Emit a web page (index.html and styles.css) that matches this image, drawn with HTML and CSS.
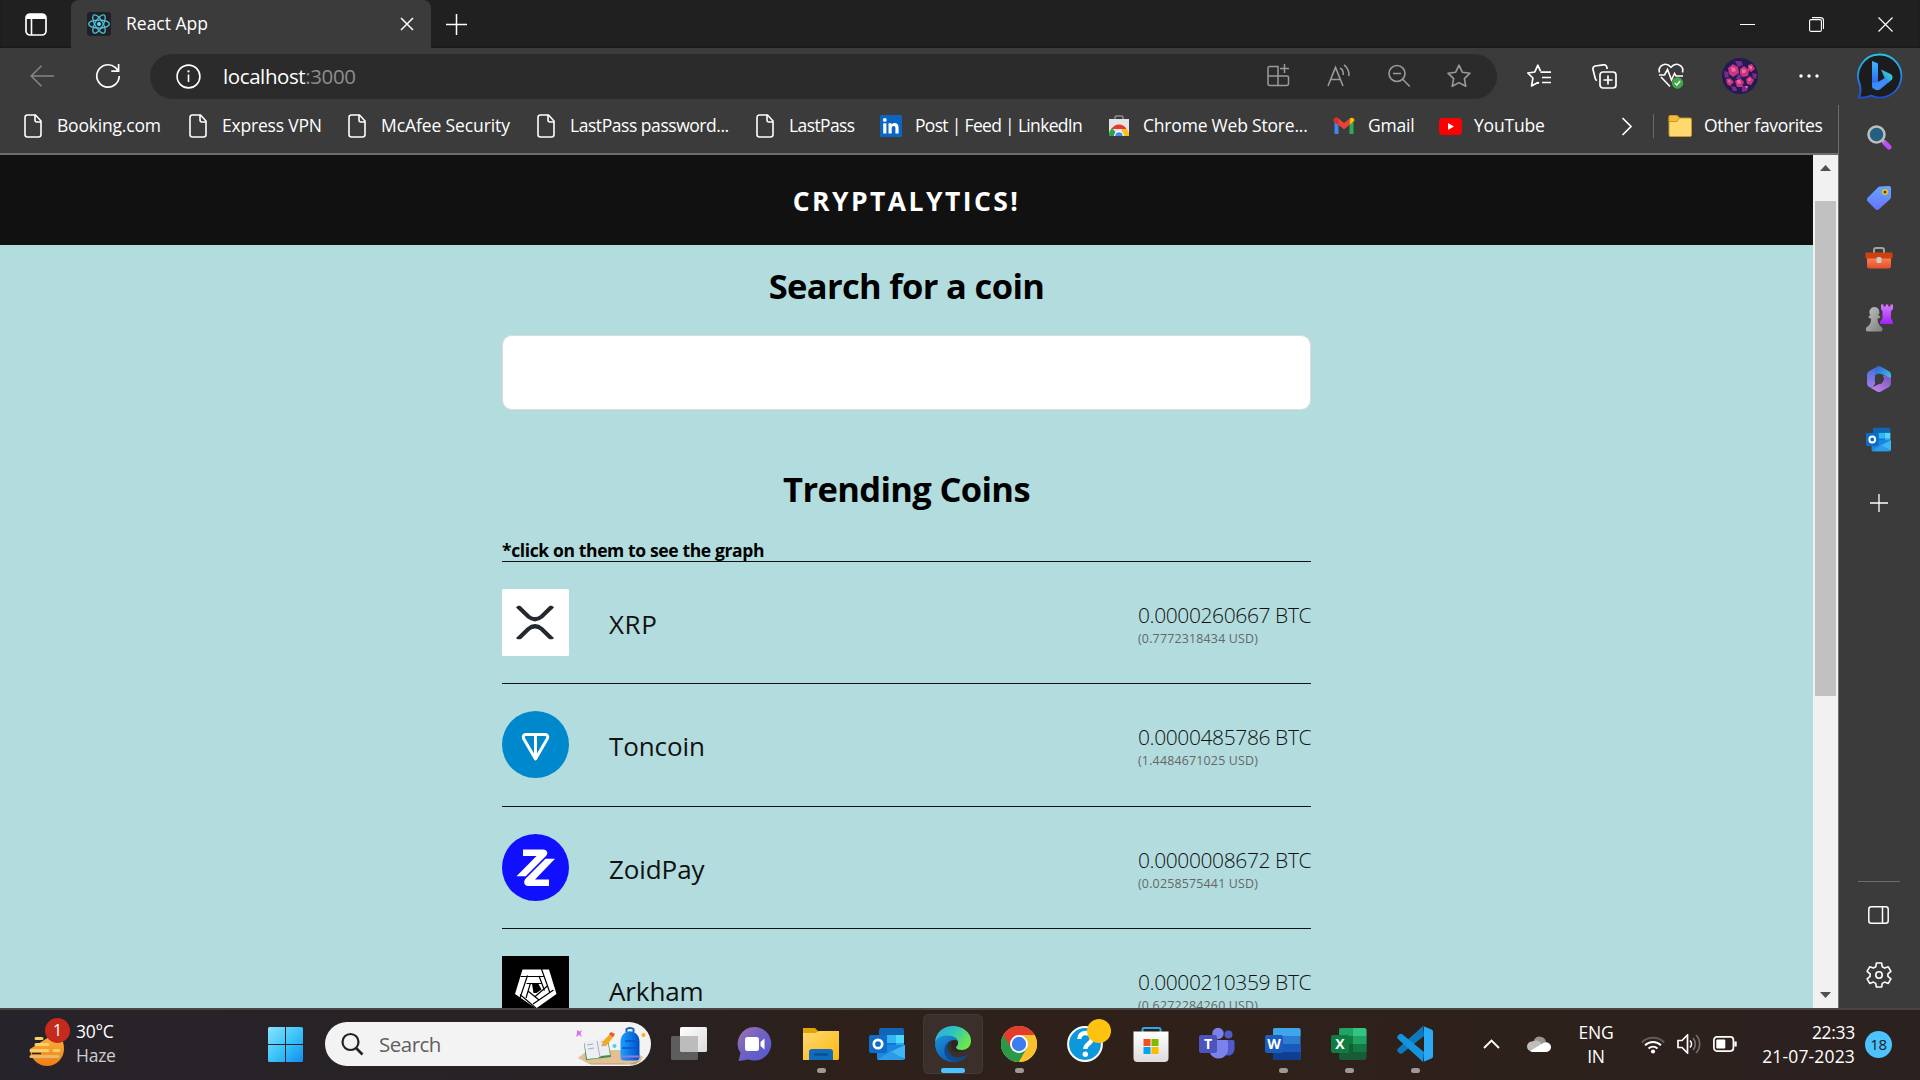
FILE: index.html
```
<!DOCTYPE html>
<html lang="en">
<head>
<meta charset="utf-8">
<title>React App</title>
<link rel="stylesheet" href="styles.css">
</head>
<body>
<svg class="defs" width="0" height="0" aria-hidden="true">
  <defs>
    <linearGradient id="win" x1="0" y1="0" x2="1" y2="1"><stop offset="0" stop-color="#8ce2ff"/><stop offset=".5" stop-color="#3cc5f9"/><stop offset="1" stop-color="#0f8ff0"/></linearGradient>
    <linearGradient id="bing" x1="0" y1="0" x2="0" y2="1"><stop offset="0" stop-color="#37bdff"/><stop offset="1" stop-color="#2b4ff0"/></linearGradient>
    <linearGradient id="bing2" x1="0" y1="1" x2="1" y2="0"><stop offset="0" stop-color="#1a7cf2"/><stop offset="1" stop-color="#49e6c8"/></linearGradient>
    <linearGradient id="bubble" x1="0" y1="0" x2="0" y2="1"><stop offset="0" stop-color="#22c7e8"/><stop offset="1" stop-color="#1b4fd8"/></linearGradient>
    <linearGradient id="tag" x1="0" y1="0" x2="0" y2="1"><stop offset="0" stop-color="#66a8ff"/><stop offset="1" stop-color="#6672ff"/></linearGradient>
    <linearGradient id="box" x1="0" y1="0" x2="0" y2="1"><stop offset="0" stop-color="#ff7f55"/><stop offset="1" stop-color="#e0502a"/></linearGradient>
    <linearGradient id="rook" x1="0" y1="0" x2="0" y2="1"><stop offset="0" stop-color="#d87cff"/><stop offset="1" stop-color="#a020f8"/></linearGradient>
    <linearGradient id="pawn" x1="0" y1="0" x2="1" y2="1"><stop offset="0" stop-color="#c4c4c4"/><stop offset="1" stop-color="#7d7d7d"/></linearGradient>
    <linearGradient id="m1" x1="0" y1="0" x2="0" y2="1"><stop offset="0" stop-color="#3f6fd6"/><stop offset="1" stop-color="#a77bea"/></linearGradient>
    <linearGradient id="m2" x1="0" y1="0" x2="1" y2="1"><stop offset="0" stop-color="#2a62cf"/><stop offset="1" stop-color="#49c8f5"/></linearGradient>
    <linearGradient id="m3" x1="0" y1="1" x2="1" y2="0"><stop offset="0" stop-color="#c58af0"/><stop offset="1" stop-color="#7a4fbd"/></linearGradient>
    <linearGradient id="chat" x1="0" y1="0" x2="1" y2="1"><stop offset="0" stop-color="#a274b0"/><stop offset=".45" stop-color="#6f62c4"/><stop offset="1" stop-color="#5058d0"/></linearGradient>
    <linearGradient id="folder" x1="0" y1="0" x2="1" y2="1"><stop offset="0" stop-color="#ffd970"/><stop offset="1" stop-color="#fbb812"/></linearGradient>
    <linearGradient id="edgeTop" x1="0" y1="0" x2="1" y2=".5"><stop offset="0" stop-color="#2fa8e6"/><stop offset=".5" stop-color="#2fc3c0"/><stop offset="1" stop-color="#6be84a"/></linearGradient>
    <linearGradient id="edgeLow" x1="0" y1="0" x2=".6" y2="1"><stop offset="0" stop-color="#1b93dc"/><stop offset="1" stop-color="#0c5cb4"/></linearGradient>
    <linearGradient id="shop" x1="0" y1="0" x2="0" y2="1"><stop offset="0" stop-color="#ffffff"/><stop offset="1" stop-color="#dcdcdc"/></linearGradient>
    <linearGradient id="haze" x1="0" y1="0" x2="0" y2="1"><stop offset="0" stop-color="#f9b83a"/><stop offset="1" stop-color="#f07c14"/></linearGradient>
    <linearGradient id="view" x1="0" y1="0" x2="1" y2="1"><stop offset="0" stop-color="#ffffff"/><stop offset="1" stop-color="#dcdcdc"/></linearGradient>
    <linearGradient id="pack" x1="0" y1="0" x2="1" y2="0"><stop offset="0" stop-color="#1aa0ff"/><stop offset="1" stop-color="#0050c8"/></linearGradient>
    <symbol id="doc" viewBox="0 0 18 24"><path d="M3 1h8.500l5.500 6v13.500a2.500 2.500 0 0 1-2.500 2.500H3.500A2.500 2.500 0 0 1 1 20.500v-17A2.500 2.500 0 0 1 3 1zM11 1.500v4.500a2 2 0 0 0 2 2h4" fill="none" stroke="#fff" stroke-width="1.600"/></symbol>
    <symbol id="outlook" viewBox="0 0 36 34" preserveAspectRatio="none">
      <rect x="10" y="1" width="25" height="26" rx="2" fill="#1066b5"/>
      <path d="M10 8h8v8h-8z" fill="#1272c8"/><path d="M18 8h9v8h-9z" fill="#33b4f3"/><path d="M27 8h8v8h-8z" fill="#50d9ff"/><path d="M18 16h9v7h-9z" fill="#0f78d4"/><path d="M27 16h8v6h-8z" fill="#2aa8ec"/>
      <path d="M8 18l28 0v13a2 2 0 0 1-2 2H10a2 2 0 0 1-2-2z" fill="#1a86dc"/><path d="M36 18v14L21 25z" fill="#3fb6f4"/><path d="M8 33l14-9 13 9z" fill="#2a9ce8"/>
      <rect x="0" y="8" width="18" height="18" rx="2" fill="#0f6cc8"/><circle cx="9" cy="17" r="4.200" fill="none" stroke="#fff" stroke-width="2.700"/>
    </symbol>
  </defs>
</svg>

<div class="screen">
  <header class="tabs">
    <svg class="tabs__menu" width="22" height="23" viewBox="0 0 22 23"><rect x="1" y="1" width="20" height="21" rx="4" fill="none" stroke="#fff" stroke-width="1.700"/><path d="M1 6V5a4 4 0 0 1 4-4h12a4 4 0 0 1 4 4v1z" fill="#fff"/><path d="M6.500 6v16" stroke="#fff" stroke-width="1.600"/></svg>
    <div class="tab">
      <svg width="24" height="24" viewBox="0 0 24 24"><rect width="24" height="24" rx="3" fill="#202124"/><g fill="none" stroke="#52c1de" stroke-width="1.250"><ellipse cx="12" cy="12" rx="10.300" ry="4"/><ellipse cx="12" cy="12" rx="10.300" ry="4" transform="rotate(60 12 12)"/><ellipse cx="12" cy="12" rx="10.300" ry="4" transform="rotate(120 12 12)"/></g><circle cx="12" cy="12" r="2" fill="#61dafb"/></svg>
      <span class="tab__title">React App</span>
      <svg width="14" height="14" viewBox="0 0 14 14"><path d="M1 1l12 12M13 1L1 13" stroke="#fff" stroke-width="1.500"/></svg>
    </div>
    <svg class="tabs__new" width="21" height="21" viewBox="0 0 21 21"><path d="M10.500 0v21M0 10.500h21" stroke="#fff" stroke-width="1.500"/></svg>
    <div class="window-controls">
      <svg width="15" height="15" viewBox="0 0 15 15"><path d="M0 7.500h15" stroke="#fff"/></svg>
      <svg width="15" height="15" viewBox="0 0 15 15"><rect x=".6" y="2.600" width="11.800" height="11.800" rx="1.500" fill="none" stroke="#fff" stroke-width="1.100"/><path d="M3 .6h8.500a3 3 0 0 1 3 3V12" fill="none" stroke="#fff" stroke-width="1.100"/></svg>
      <svg width="15" height="15" viewBox="0 0 15 15"><path d="M.5.500l14 14M14.500.500l-14 14" stroke="#fff" stroke-width="1.200"/></svg>
    </div>
  </header>

  <div class="toolbar">
    <svg class="back" width="24" height="22" viewBox="0 0 24 22"><path d="M24 11H1M11.500.800L1.200 11l10.300 10.200" fill="none" stroke="#868686" stroke-width="1.600"/></svg>
    <svg class="reload" width="26" height="26" viewBox="0 0 26 26"><path d="M24.200 13a11.200 11.200 0 1 1-4-8.600l3 2.900M23.600 1v7.200h-7.300" fill="none" stroke="#fff" stroke-width="1.700"/></svg>
    <div class="omnibox">
      <svg width="25" height="25" viewBox="0 0 25 25"><circle cx="12.500" cy="12.500" r="11.400" fill="none" stroke="#fff" stroke-width="1.600"/><path d="M12.500 10.500v7.500" stroke="#fff" stroke-width="1.600"/><circle cx="12.500" cy="7.400" r="1.100" fill="#fff"/></svg>
      <span class="omnibox__url">localhost<span class="omnibox__port">:3000</span></span>
      <div class="omnibox__tools">
        <svg width="24" height="24" viewBox="0 0 24 24"><path d="M2.500 2.500H11v19H3A2 2 0 0 1 1 19.500V4a1.500 1.500 0 0 1 1.500-1.500zM1 12h19a1.500 1.500 0 0 1 1.500 1.500v6a2 2 0 0 1-2 2H11M17.500 0v9M13 4.500h9" fill="none" stroke="#9a9a9a" stroke-width="1.500"/></svg>
        <svg width="24" height="24" viewBox="0 0 24 24"><path d="M1 22L8.500 3.500 16 22M3.800 15.500h9.500M13 4c2 1 3.500 4 3.300 7M17 1c3.500 2 5.500 7 4.800 11" fill="none" stroke="#9a9a9a" stroke-width="1.600"/></svg>
        <svg width="24" height="24" viewBox="0 0 24 24"><circle cx="10" cy="9.500" r="8" fill="none" stroke="#9a9a9a" stroke-width="1.600"/><path d="M6 9.500h8M15.800 15.500l7 7" stroke="#9a9a9a" stroke-width="1.600"/></svg>
        <svg width="24" height="24" viewBox="0 0 24 24"><path d="M12 1.200l3.300 7 7.700 1-5.600 5.400 1.400 7.700-6.800-3.700-6.800 3.700 1.400-7.700L1 9.200l7.700-1z" fill="none" stroke="#9a9a9a" stroke-width="1.600" stroke-linejoin="round"/></svg>
      </div>
    </div>
    <div class="actions">
      <svg width="24" height="24" viewBox="0 0 24 24"><path d="M13.500 7.200L10.800 1.200 7.800 8 .8 9l5.100 5L4.600 22l6.200-3.500 1.200.7M13.500 8.200H24M15 13.500h9M15 18.500h9" fill="none" stroke="#fff" stroke-width="1.700" stroke-linejoin="round"/></svg>
      <svg width="25" height="25" viewBox="0 0 25 25"><path d="M5 16.500a3 3 0 0 1-1.800-2.200L1 5.500A3 3 0 0 1 3 2L11.500.800A3 3 0 0 1 14.800 3l.4 2" fill="none" stroke="#fff" stroke-width="1.700"/><rect x="8" y="8" width="16" height="16" rx="3" fill="none" stroke="#fff" stroke-width="1.700"/><path d="M16 11.500v9M11.500 16h9" stroke="#fff" stroke-width="1.700"/></svg>
      <svg width="26" height="26" viewBox="0 0 26 26"><path d="M1.500 9.500C-.5 3 7.500-2 13 4.200 18.500-2 26.500 3 24.400 9.500M3 14l9 9.500M1 12h5.500l3-5.500 4 10.500 3-6.500 1.500 2.500H25" fill="none" stroke="#fff" stroke-width="1.600"/><circle cx="19.500" cy="20" r="5.700" fill="#43a847"/><path d="M16.800 20l2 2 3.400-4" fill="none" stroke="#fff" stroke-width="1.300"/></svg>
      <svg class="avatar" width="36" height="36" viewBox="0 0 36 36"><rect width="36" height="36" fill="#231a52"/><g fill="#c93580"><path d="M6 10l5-4 5 3 1 6-6 4-4-3zM18 11l4-3 5 4-1 6-5 1-3-3zM26 7l4-1 3 5-4 3-3-2zM13 23l5-3 4 4-2 5-5 0zM24 21l4-3 4 4-3 5-4-1zM4 21l4-1 4 4-4 4-3-2z"/></g><g fill="#7d2a8c"><path d="M2 13l4 1 1 5-4 1zM13 3l6 0 2 4-5 2zM30 15l5 1-1 5-3-1zM20 28l6 0-1 5-5 1zM9 28l5 1 1 4-4 0zM16 16l4 2-2 3-4 0z"/></g><g fill="#f06aa8"><path d="M9 9l4 1 1 3-4 1zM20 11l4 1-1 3-3 0zM15 22l3 0 1 3-3 1zM27 20l2 1-1 2-2 0zM27 8l3 0 0 3-2 0zM23 28l3 0-1 3zM6 22l3 1-2 2z"/></g></svg>
      <svg width="20" height="6" viewBox="0 0 20 6"><g fill="#fff"><circle cx="2" cy="3" r="1.700"/><circle cx="10" cy="3" r="1.700"/><circle cx="18" cy="3" r="1.700"/></g></svg>
      <svg width="46" height="46" viewBox="0 0 46 46"><path d="M23 1.500A21.500 21.500 0 1 1 14 42.600C10 44.500 6 44.700 1.800 44.500 4 41 4 37 3 32A21.500 21.500 0 0 1 23 1.500z" fill="#1c1c1e" stroke="url(#bubble)" stroke-width="1.800"/><path d="M15 8l6 2.500V30l-6 6z" fill="url(#bing)"/><path d="M24 16.500l9.500 4.500a4 4 0 0 1 1.500 5.500l-4 3.500-3-4z" fill="url(#bing2)"/><path d="M15 30l6-1 7-4 4.500 3.500L23 36.500c-4 2-8-1-8-5z" fill="#3b8cf8"/></svg>
    </div>
  </div>

  <div class="workspace">
    <div class="column">
      <nav class="favorites">
        <a class="fav"><svg width="18" height="24"><use href="#doc"/></svg><span>Booking.com</span></a>
        <a class="fav"><svg width="18" height="24"><use href="#doc"/></svg><span>Express VPN</span></a>
        <a class="fav"><svg width="18" height="24"><use href="#doc"/></svg><span class="loose">McAfee Security</span></a>
        <a class="fav"><svg width="18" height="24"><use href="#doc"/></svg><span class="tight">LastPass password...</span></a>
        <a class="fav"><svg width="18" height="24"><use href="#doc"/></svg><span class="tighter">LastPass</span></a>
        <a class="fav"><svg width="22" height="22" viewBox="0 0 22 22"><rect width="22" height="22" rx="1.500" fill="#0a66c2"/><g fill="#fff"><rect x="3.200" y="8.300" width="3.200" height="10.200"/><circle cx="4.800" cy="4.900" r="1.900"/><path d="M8.500 8.300h3.100v1.400c1.500-2.500 7-2.500 7 2.800v6h-3.200v-5.300c0-3-3.700-2.700-3.700 0v5.300H8.500z"/></g></svg><span class="tightest">Post | Feed | LinkedIn</span></a>
        <a class="fav"><svg width="22" height="22" viewBox="0 0 22 22"><path d="M7 5V2.500A1.500 1.500 0 0 1 8.500 1h5A1.500 1.500 0 0 1 15 2.500V5" fill="none" stroke="#8c8c8c" stroke-width="1.600"/><path d="M1 4h20v17H1z" fill="#e4e4e4"/><path d="M1 21v-2a10 10 0 0 1 3-6l5 6v2z" fill="#2ba24c"/><path d="M3.500 14a8.500 8.500 0 0 1 15 0z" fill="#e33b2e"/><path d="M14 14h5l2 4v3h-8z" fill="#fbc116"/><path d="M6 21a5 5 0 0 1 10 0z" fill="#fff"/><path d="M7.300 21a3.700 3.700 0 0 1 7.400 0z" fill="#4285f4"/></svg><span>Chrome Web Store...</span></a>
        <a class="fav"><svg width="22" height="18" viewBox="0 0 22 18"><path d="M1.500 1.500v15.500H5.500V5z" fill="#4285f4"/><path d="M20.500 1.500v15.500h-4V5z" fill="#34a853"/><path d="M16.500 5V1.800C18 0 21.500.500 21.500 3.500L16.500 8z" fill="#fbbc04"/><path d="M.5 3.500C.5.500 4-.2 5.500 1.500L11 6l5.500-4.200V8L11 12.200 5.500 8z" fill="#ea4335"/><path d="M.5 3.500C.5.500 4 0 5.500 1.800V8L.5 4.500z" fill="#d93025"/></svg><span>Gmail</span></a>
        <a class="fav"><svg width="23" height="17" viewBox="0 0 23 17"><rect width="23" height="17" rx="4" fill="#f00"/><path d="M9 5l6 3.500L9 12z" fill="#fff"/></svg><span>YouTube</span></a>
        <svg width="12" height="19" viewBox="0 0 12 19"><path d="M1.500 1l8.500 8.500L1.500 18" fill="none" stroke="#fff" stroke-width="1.700"/></svg>
        <span class="favorites__rule"></span>
        <a class="fav"><svg width="24" height="22" viewBox="0 0 24 22"><path d="M1 2a1.500 1.500 0 0 1 1.500-1.500H9L11.500 3H22a1.500 1.500 0 0 1 1.500 1.500V20A1.500 1.500 0 0 1 22 21.500H2.500A1.500 1.500 0 0 1 1 20z" fill="#ffd96e" stroke="#c9962a"/><path d="M1 2a1.500 1.500 0 0 1 1.500-1.500H9L11.500 3 9 6.500H1z" fill="#f2bd3b" stroke="#c9962a"/></svg><span class="other">Other favorites</span></a>
      </nav>

      <div class="viewport">
        <main class="page">
          <div class="page__brand">CRYPTALYTICS!</div>
          <section class="content">
            <h2 class="content__heading">Search for a coin</h2>
            <input class="content__search" type="text" aria-label="Search for a coin">
            <h2 class="content__heading">Trending Coins</h2>
            <h4 class="content__note">*click on them to see the graph</h4>
            <div class="coin">
              <svg class="coin__logo" viewBox="0 0 67 67"><rect width="67" height="67" rx="1.500" fill="#fff"/><path d="M15.500 17l10.800 10.500q6.700 5.500 13.400 0L50.500 17M15.500 50.500L26.300 40q6.700-5.500 13.400 0l10.800 10.500" fill="none" stroke="#23292f" stroke-width="4.200"/><path d="M12 12h43v4.700H12zM12 50.300h43V55H12z" fill="#fff"/></svg>
              <span class="coin__name coin__name--wide">XRP</span>
              <span class="coin__price"><span class="coin__btc">0.0000260667 BTC</span><span class="coin__usd">(0.7772318434 USD)</span></span>
            </div>
            <div class="coin">
              <svg class="coin__logo" viewBox="0 0 67 67"><circle cx="33.500" cy="33.500" r="33.500" fill="#0088cc"/><path d="M24 23.500h19c2.500 0 3.500 2.300 2.300 4.300L33.500 48 21.700 27.800c-1.200-2-.2-4.300 2.300-4.300zM33.500 23.500V47" fill="none" stroke="#fff" stroke-width="3" stroke-linejoin="round"/></svg>
              <span class="coin__name">Toncoin</span>
              <span class="coin__price"><span class="coin__btc">0.0000485786 BTC</span><span class="coin__usd">(1.4484671025 USD)</span></span>
            </div>
            <div class="coin">
              <svg class="coin__logo" viewBox="0 0 67 67"><circle cx="33.500" cy="33.500" r="33.500" fill="#1010ff"/><path d="M21 15.500h20.500c3.600 0 5 4 2.700 6.300L23.700 42.200h-9.200L34.500 22H21z" fill="#fff"/><path d="M53 24.800h-9.500L24 44.300c-3.500 3.500-1.500 7.700 2 7.700h21v-6.500H33z" fill="#fff"/></svg>
              <span class="coin__name">ZoidPay</span>
              <span class="coin__price"><span class="coin__btc">0.0000008672 BTC</span><span class="coin__usd">(0.0258575441 USD)</span></span>
            </div>
            <div class="coin">
              <svg class="coin__logo" viewBox="0 0 67 67"><rect width="67" height="67"/><path d="M20.500 13.500h26.500l7.500 24.500L34 52.500 13 38z" fill="#fff"/><path d="M30 28h6.500l3 5.500-5 3.500-3 0z" fill="#000"/><g fill="none" stroke="#000" stroke-width="1.200"><path d="M18.500 20.500h23M39.500 13l8.500 24M51.500 34L31 48M35 53L18 38.500M18 42l7.500-22.500M24.500 27.500h15M37 20l5.500 14.500M46 29.500L32.500 41M37 44L26 35M24 42l4.500-15"/></g></svg>
              <span class="coin__name">Arkham</span>
              <span class="coin__price"><span class="coin__btc">0.0000210359 BTC</span><span class="coin__usd">(0.6272284260 USD)</span></span>
            </div>
          </section>
        </main>
        <div class="scrollbar">
          <svg width="11" height="6" viewBox="0 0 11 6"><path d="M5.500 0L11 6H0z" fill="#505050"/></svg>
          <span class="scrollbar__thumb"></span>
          <svg width="11" height="6" viewBox="0 0 11 6"><path d="M0 0h11L5.500 6z" fill="#505050"/></svg>
        </div>
      </div>
    </div>

    <aside class="rail">
      <div class="rail__slot"><svg width="26" height="26" viewBox="0 0 26 26"><path d="M18.500 18.500l4.500 4.500" stroke="#c04cf8" stroke-width="5" stroke-linecap="round"/><path d="M15.500 15.500l3 3" stroke="#9c9c9c" stroke-width="2.500"/><circle cx="10.500" cy="10.500" r="8" fill="#225f80" stroke="#bdbdbd" stroke-width="2.500"/></svg></div>
      <div class="rail__slot"><svg width="24" height="24" viewBox="0 0 24 24"><path d="M13 .5L22 0a2 2 0 0 1 2 2v9a3 3 0 0 1-1 2.200L12.200 23a3 3 0 0 1-4 0L.8 15.500a3 3 0 0 1 0-4L11 1.400A3 3 0 0 1 13 .5z" fill="url(#tag)"/><circle cx="18" cy="6" r="2.300" fill="#46464a" stroke="#f5c800" stroke-width="1.500"/></svg></div>
      <div class="rail__slot"><svg width="28" height="22" viewBox="0 0 28 22"><path d="M9 6V3a2 2 0 0 1 2-2h6a2 2 0 0 1 2 2v3" fill="none" stroke="#a3a3a3" stroke-width="2"/><path d="M2 11h24v8a2.500 2.500 0 0 1-2.500 2.500h-19A2.500 2.500 0 0 1 2 19z" fill="url(#box)"/><rect x=".5" y="5.500" width="27" height="6" rx="1" fill="#cf400f"/><rect x="11.500" y="10" width="5" height="6" rx="1.500" fill="#c9c9c9"/></svg></div>
      <div class="rail__slot"><svg width="28" height="28" viewBox="0 0 28 28"><path d="M16 .5h2.500v2h2.200v-2h2.600v2h2.200v-2H28V5l-2 2.500v7l2 3.500v2H15v-2l2.500-3.500v-7L16 5z" fill="url(#rook)"/><path d="M9.500 3a5 5 0 0 1 3.700 8.300c3 .7 3 3-.7 3.500.3 4 1.200 6.200 4 8.200 1.500 1 1.500 4-.5 4.500H2.500c-2-.5-2-3.500-.5-4.500 3-2 4-4.200 4.200-8.200-3.200-.5-3.500-2.800-.5-3.500A5 5 0 0 1 9.500 3z" fill="url(#pawn)"/></svg></div>
      <div class="rail__slot"><svg width="24" height="26" viewBox="0 0 24 26"><path d="M11.500 0L2 5.300A4 4 0 0 0 0 8.800v8.700a4 4 0 0 0 2 3.400L5 22l3-4V9l3-6z" fill="url(#m1)"/><path d="M10 .7a4 4 0 0 1 4 0l8 4.600a4 4 0 0 1 2 3.500v6L17.500 9 12 7.500 8 9V4z" fill="url(#m2)"/><path d="M24 12v5.500a4 4 0 0 1-2 3.400l-8 4.500a4 4 0 0 1-4 0L4 22l8-4 4-2.500V9z" fill="url(#m3)"/><path d="M9.500 9l5.500-.8 2.300 4.800-2.800 4.700-5.500.3-1.500-5z" fill="#3b3b3b"/></svg></div>
      <div class="rail__slot"><svg width="25" height="25"><use href="#outlook"/></svg></div>
      <svg class="rail__add" width="18" height="18" viewBox="0 0 18 18"><path d="M9 0v18M0 9h18" stroke="#fff" stroke-width="1.300"/></svg>
      <span class="rail__rule"></span>
      <svg class="rail__panel" width="21" height="18" viewBox="0 0 21 18"><rect x=".8" y=".8" width="19.400" height="16.400" rx="2.500" fill="none" stroke="#fff" stroke-width="1.500"/><path d="M14.500 1v16" stroke="#fff" stroke-width="1.500"/></svg>
      <svg width="26" height="26" viewBox="0 0 26 26"><path d="M10.400 1h5.200l.7 3.800 2.300 1.300 3.700-1.300 2.600 4.500-3 2.500v2.600l3 2.500-2.600 4.500-3.700-1.300-2.300 1.300-.7 3.600h-5.200l-.7-3.600-2.300-1.300-3.700 1.300-2.600-4.500 3-2.500v-2.600l-3-2.500 2.600-4.500 3.700 1.300 2.300-1.300z" fill="none" stroke="#fff" stroke-width="1.600" stroke-linejoin="round"/><circle cx="13" cy="13" r="3.200" fill="none" stroke="#fff" stroke-width="1.600"/></svg>
    </aside>
  </div>

  <footer class="taskbar">
    <div class="weather">
      <svg width="36" height="44" viewBox="0 0 36 44"><path d="M1 27a17 17 0 0 0 34 0c0-8-3-13-10-15L12 20z" fill="url(#haze)"/><g stroke="#f6cf6e" stroke-width="3" stroke-linecap="round"><path d="M7 16.500h6M7 22.500h12M2 28.500h17M25 28.500h5" /><path d="M2 34.500h27" stroke="#e9ba6c"/></g><path d="M3 31.500h9" stroke="#2a2527" stroke-width="1.500"/></svg>
      <span class="weather__badge">1</span>
      <div class="weather__text"><span>30°C</span><span class="weather__state">Haze</span></div>
    </div>
    <svg class="start" width="35" height="35" viewBox="0 0 35 35"><path d="M1.500 0H17v17H0V1.500A1.500 1.500 0 0 1 1.500 0zM18 0h15.500A1.500 1.500 0 0 1 35 1.500V17H18zM0 18h17v17H1.500A1.500 1.500 0 0 1 0 33.500zM18 18h17v15.500a1.500 1.500 0 0 1-1.500 1.500H18z" fill="url(#win)"/></svg>
    <div class="search">
      <svg width="23" height="24" viewBox="0 0 23 24"><circle cx="9.500" cy="10" r="8" fill="none" stroke="#222" stroke-width="2.200"/><path d="M15 16l6.500 6.500" stroke="#222" stroke-width="2.600"/></svg>
      <span class="search__label">Search</span>
      <svg class="search__art" width="72" height="44" viewBox="0 0 72 44"><path d="M3 36l10-8h44l11 7-3 5-18 2H14z" fill="#e2bf95"/><path d="M14 41.500h40l12-3-6 4H16z" fill="#c49a70"/><path d="M9 21l12-1 3-2 9-1 3 18-25 3z" fill="#3a8f4a"/><path d="M9 19l11-1 2 1 2-3 8-1 3 18-9 1-3 2-11 1z" fill="#eceef4"/><path d="M22 19l3 16" stroke="#a9b0c0"/><path d="M12 23l6-1M13 27l6-1M26 20l5-1M27 24l5-1" stroke="#a8acb8"/><path d="M26 24l3-6 6-6 4 2-7 9z" fill="#f7a823"/><path d="M34 12l2-2 4 2-2 3z" fill="#e8533f"/><path d="M2 8l2.500 1.500L7 8l-1.500 3.500L7 15l-3-2-3 2 1-3.500z" fill="#dc70f5"/><circle cx="39.500" cy="24" r="2" fill="#50cde8"/><circle cx="68.500" cy="13" r="2" fill="#ffb400"/><path d="M51.500 10V7q3.500-2 7 0v3" fill="none" stroke="#1a64b4" stroke-width="2"/><path d="M45.500 20c0-14.500 19-14.500 19 0v15a3.500 3.500 0 0 1-3.500 3.500H49a3.500 3.500 0 0 1-3.500-3.500z" fill="url(#pack)"/><path d="M47 26h16M50 19h10" stroke="#0a55c4" stroke-width="1.500"/><path d="M46 34.500h18" stroke="#9c74dc" stroke-width="2"/></svg>
    </div>
    <div class="apps">
      <div class="app"><svg width="36" height="36" viewBox="0 0 36 36"><rect x="9" y="1" width="27" height="25" rx="1.500" fill="url(#view)"/><rect x="0" y="10" width="27" height="24" rx="1.500" fill="#5d5d5d"/><path d="M9 10h18v16H10.500A1.500 1.500 0 0 1 9 24.500z" fill="#bcbcbc"/></svg></div>
      <div class="app"><svg width="36" height="36" viewBox="0 0 36 36"><path d="M18 1a16.800 16.800 0 1 1-6.500 32.500L1.500 35l2-8A16.800 16.800 0 0 1 18 1z" fill="url(#chat)"/><rect x="8" y="11" width="14" height="14" rx="2.500" fill="#fff"/><path d="M23.500 16l4-3.500v11l-4-3.500z" fill="#fff"/></svg></div>
      <div class="app app--open"><svg width="36" height="36" viewBox="0 0 36 36"><path d="M0 2h12l4 4v6H0z" fill="#e1a307"/><path d="M0 7h12.500L16 5h20v27.500a1.500 1.500 0 0 1-1.500 1.500H0z" fill="url(#folder)"/><path d="M6 34V26a3 3 0 0 1 3-3h18a3 3 0 0 1 3 3v8z" fill="#0f6cbd"/><path d="M11 28.500h14" stroke="#0a4a86" stroke-width="2"/></svg></div>
      <div class="app"><svg width="36" height="34"><use href="#outlook"/></svg></div>
      <div class="app app--open app--active"><svg width="36" height="36" viewBox="0 0 36 36"><path d="M0 17C0 7 8 0 18 0s18 7 18 14.500c0 6-4 9.500-9 9.500-4 0-6-1.500-6-2.500 0-1.500 2-2 2-5 0-4-5-6.500-9.500-6.500C6 10 1 13 0 17z" fill="url(#edgeTop)"/><path d="M0 17.500C1 12 7 9.500 12 9.500c6 0 10 3 11 6-7-5-14 3-9.500 10.500C17 32 23 34 25 34.500c-2 1-4 1.500-7 1.500C8 36 0 28 0 17.500z" fill="url(#edgeLow)"/><path d="M16 14.500c-4 3-4.500 7.500-2.500 11.500 3.500 7 13.500 6.500 19.500 2-1.500 3-4.500 6-8 7-8 3-17-4-15.500-12C10 18.500 13 15.500 16 14.500z" fill="#114a8b"/><path d="M18 14.500c2.500-.5 5 0 5 2.500s-2 3-2 4.500c0 2 3 3.500 7 3.500-5 2-10 1-11.500-3-1-3-.5-6 1.500-7.500z" fill="#2c2523"/></svg></div>
      <div class="app app--open"><svg width="36" height="36" viewBox="0 0 36 36"><circle cx="18" cy="18" r="18" fill="#fbc02d"/><path d="M18 18L2.400 9A18 18 0 0 0 18 36l8-14z" fill="#2a9a48"/><path d="M2.400 9a18 18 0 0 1 31.200 0H18v9l-8 4z" fill="#e33b2e"/><path d="M18 9h15.600A18 18 0 0 1 18 36l8-13.500z" fill="#fbc02d"/><circle cx="18" cy="18" r="9" fill="#fff"/><circle cx="18" cy="18" r="7.200" fill="#3c7df0"/></svg></div>
      <div class="app"><svg width="36" height="36" viewBox="0 0 36 36"><circle cx="18" cy="18" r="16.900" fill="#0d98dc" stroke="#fff" stroke-width="2"/><path d="M12.300 13c0-8 12.400-8 12.400 0 0 4.500-6.400 5-6.400 10" fill="none" stroke="#fff" stroke-width="4.300"/><circle cx="18.300" cy="28.300" r="2.700" fill="#fff"/></svg><span class="app__dot"></span></div>
      <div class="app"><svg width="36" height="36" viewBox="0 0 36 36"><path d="M9.500 7V3.500A1.500 1.500 0 0 1 11 2h15a1.500 1.500 0 0 1 1.500 1.500V7" fill="none" stroke="#2ba8e8" stroke-width="2"/><path d="M.5 5.500h35V32a4 4 0 0 1-4 4h-27a4 4 0 0 1-4-4z" fill="url(#shop)"/><path d="M10.500 13h7v7h-7z" fill="#f25022"/><path d="M18.500 13h7v7h-7z" fill="#7fba00"/><path d="M10.500 21h7v7h-7z" fill="#00a4ef"/><path d="M18.500 21h7v7h-7z" fill="#ffb900"/></svg></div>
      <div class="app"><svg width="36" height="36" viewBox="0 0 36 36"><circle cx="29.500" cy="8.500" r="4" fill="#5059c9"/><path d="M22 14h12a1.500 1.500 0 0 1 1.500 1.500V24a6.500 6.500 0 0 1-9 5z" fill="#5059c9"/><circle cx="19" cy="7.500" r="5.700" fill="#7b83eb"/><path d="M11 14h16.500a1.500 1.500 0 0 1 1.500 1.500V24a9.500 9.500 0 0 1-18.500 2z" fill="#7b83eb"/><rect x="0" y="9" width="18" height="18" rx="2" fill="#4b53bc"/></svg><span class="app__letter">T</span></div>
      <div class="app app--open"><svg width="36" height="36" viewBox="0 0 36 36"><rect x="8" y="2" width="27.500" height="32" rx="2" fill="#2b7cd3"/><path d="M8 4a2 2 0 0 1 2-2h23.500a2 2 0 0 1 2 2v6H8z" fill="#41a5ee"/><path d="M8 18h27.500v8H8z" fill="#185abd"/><path d="M8 26h27.500v6a2 2 0 0 1-2 2H10a2 2 0 0 1-2-2z" fill="#103f91"/><rect x="0" y="9" width="18" height="18" rx="2" fill="#1a5dbe"/></svg><span class="app__letter">W</span></div>
      <div class="app app--open"><svg width="36" height="36" viewBox="0 0 36 36"><rect x="8" y="2" width="27.500" height="32" rx="2" fill="#185c37"/><path d="M8 4a2 2 0 0 1 2-2h12v8H8z" fill="#21a366"/><path d="M22 2h11.500a2 2 0 0 1 2 2v6H22z" fill="#33c481"/><path d="M8 10h14v8H8z" fill="#107c41"/><path d="M22 10h13.500v8H22z" fill="#21a366"/><path d="M22 18h13.500v8H22z" fill="#107c41"/><rect x="0" y="9" width="18" height="18" rx="2" fill="#107c41"/></svg><span class="app__letter">X</span></div>
      <div class="app app--open"><svg width="36" height="36" viewBox="0 0 36 36"><path d="M26 0L1 22.500c-1 1-1 2.500 0 3.500l1.500 1.200c.8.700 2 .7 2.800 0L27 10z" fill="#0f79bf"/><path d="M26 36L1 13c-1-1-1-2.500 0-3.500l1.500-1.200c.8-.7 2-.7 2.800 0L27 26z" fill="#1493de"/><path d="M26 0l8.500 3.500A2.500 2.500 0 0 1 36 6v24a2.500 2.500 0 0 1-1.500 2.500L26 36c1-.5 1-1 1-2V2c0-1-.5-1.500-1-2z" fill="#2aaaf4"/></svg></div>
    </div>
    <div class="tray">
      <svg class="tray__more" width="17" height="10" viewBox="0 0 17 10"><path d="M1 9l7.500-7.500L16 9" fill="none" stroke="#fff" stroke-width="1.900"/></svg>
      <svg class="tray__cloud" width="24" height="16" viewBox="0 0 24 16"><path d="M7 4a6.500 6.500 0 0 1 12 1.500L12 10z" fill="#989593"/><path d="M5 15.500A5 5 0 0 1 5 5.500c4-2 8-.5 9.500 2.500L9 15z" fill="#bfbdbc"/><path d="M3 15l14-8.500c3-1 7 1 7 4.500a4.800 4.800 0 0 1-5 5H5z" fill="#fff"/></svg>
      <div class="lang"><span>ENG</span><span>IN</span></div>
      <div class="status">
        <svg width="24" height="19" viewBox="0 0 24 19"><g fill="none" stroke="#fff" stroke-width="1.900"><path d="M.8 7.500a15.500 15.500 0 0 1 22.400 0" stroke="#625b58"/><path d="M4 10.300a11.500 11.500 0 0 1 16 0M7.500 13.500a6.800 6.800 0 0 1 9 0"/></g><circle cx="12" cy="16.500" r="2.100" fill="#fff"/></svg>
        <svg width="24" height="20" viewBox="0 0 24 20"><path d="M1 6.500h4L10.500 1v18L5 13.500H1zM13 6.500a5 5 0 0 1 0 7" fill="none" stroke="#fff" stroke-width="1.700"/><path d="M16 4a9 9 0 0 1 0 12M19 1a13 13 0 0 1 0 18" fill="none" stroke="#756f6c" stroke-width="1.700"/></svg>
        <svg width="24" height="16" viewBox="0 0 24 16"><rect x=".9" y=".9" width="19.500" height="14.200" rx="3" fill="none" stroke="#fff" stroke-width="1.700"/><rect x="3.300" y="3.500" width="9" height="9" rx="1" fill="#fff"/><path d="M22.500 5.500v5" stroke="#fff" stroke-width="2.400"/></svg>
      </div>
      <div class="clock"><span class="clock__time">22:33</span><span>21-07-2023</span></div>
      <span class="tray__count">18</span>
    </div>
  </footer>
</div>
</body>
</html>
```
FILE: styles.css
```
* { box-sizing: border-box; }
html, body { margin: 0; height: 100%; overflow: hidden; }
body { font-family: "Open Sans", "Noto Sans", sans-serif; color: #fff; }
svg { display: block; flex: none; }
.defs { position: absolute; }
.screen { display: flex; flex-direction: column; width: 1920px; height: 1080px; background: #3b3b3b; }

/* Tab strip */
.tabs { display: flex; align-items: center; height: 48px; background: #202020; flex: none; box-shadow: inset 0 -1px 2px #181818; }
.tabs__menu { margin: 0 24px 0 25px; }
.tab { display: flex; align-items: center; align-self: stretch; width: 360px; padding: 0 17px 0 16px; border-radius: 8px 8px 0 0; background: #3b3b3b; }
.tab__title { flex: 1; padding: 0 0 2px 15px; font-size: 17.5px; line-height: 24px; }
.tabs__new { margin-left: 15px; }
.window-controls { display: flex; gap: 54px; margin-left: auto; margin-right: 27px; }

/* Toolbar */
.toolbar { display: flex; align-items: center; height: 57px; padding: 0 0 1px 30px; flex: none; }
.back { margin-right: 41px; }
.reload { margin-right: 29px; }
.omnibox { display: flex; align-items: center; width: 1347px; height: 45px; padding: 0 26px 0 26px; border-radius: 23px; background: #2b2b2b; }
.omnibox__url { flex: 1; padding: 0 0 1px 22px; font-size: 20.5px; line-height: 28px; letter-spacing: -0.4px; }
.omnibox__port { color: #8e8e8e; }
.omnibox__tools { display: flex; gap: 36px; }
.actions { display: flex; align-items: center; flex: 1; padding-left: 30px; }
.actions svg { margin-right: 41px; }
.actions svg:nth-child(3) { margin-right: 38px; }
.actions svg:nth-child(5) { margin-right: 38px; }
.actions svg:last-child { margin-right: 0; }
.avatar { border-radius: 50%; }

/* Favorites bar */
.workspace { display: flex; flex: 1; min-height: 0; }
.column { display: flex; flex-direction: column; width: 1838px; }
.favorites { display: grid; grid-template-columns: 165px 159px 189px 219px 124px 228px 225px 106px 182px 32px 15px 1fr; align-items: center; height: 50px; padding: 0 0 6px 24px; border-bottom: 2px solid #6d6d6d; flex: none; }
.fav { display: flex; align-items: center; gap: 15px; font-size: 17.5px; line-height: 24px; letter-spacing: -0.2px; white-space: nowrap; }
.fav span { padding-bottom: 2px; }
.fav svg[width="22"] { margin-right: -2px; }
.fav svg[width="23"] { margin-right: -3px; }
.fav svg[width="24"] { margin-right: -3px; }
.fav .loose { letter-spacing: -0.1px; }
.fav .other { letter-spacing: -0.3px; }
.fav .tight { letter-spacing: -0.45px; }
.fav .tighter { letter-spacing: -0.6px; }
.fav .tightest { letter-spacing: -0.68px; }
.favorites__rule { width: 1px; height: 24px; background: #6a6a6a; }

/* Web page */
.viewport { display: flex; flex: 1; min-height: 0; }
.page { width: 1813px; overflow: hidden; background: #b2dcde; color: #000; }
.page__brand { height: 90px; background: #111; color: #fff; font-size: 26.5px; font-weight: 700; line-height: 92px; letter-spacing: 2.45px; text-align: center; }
.content { width: 809px; margin: 0 auto; padding-top: 17px; }
.content__heading { margin: 0; font-size: 34.5px; font-weight: 700; line-height: 48px; letter-spacing: -0.65px; text-align: center; }
.content__search { display: block; width: 100%; height: 75px; margin: 25px 0 55px; border: 1px solid #dcdcdc; border-radius: 10px; background: #fff; }
.content__note { margin: 26px 0 0; font-size: 17.5px; font-weight: 700; line-height: 22px; letter-spacing: -0.37px; }
.coin { display: flex; align-items: flex-start; height: 122.4px; padding-top: 27px; border-top: 1px solid #111; color: #111; }
.coin__logo { width: 67px; height: 67px; }
.coin__name { flex: 1; padding-left: 40px; font-size: 26px; font-weight: 500; line-height: 70px; letter-spacing: -0.1px; }
.coin__name--wide { letter-spacing: 0.6px; }
.coin__price { display: flex; flex-direction: column; width: 173px; padding-top: 13px; }
.coin__btc { font-size: 21px; font-weight: 350; line-height: 27px; letter-spacing: -0.4px; white-space: nowrap; }
.coin__usd { font-size: 12.4px; line-height: 19px; letter-spacing: 0.2px; color: #666; white-space: nowrap; }
.scrollbar { display: flex; flex-direction: column; align-items: center; width: 25px; padding: 10px 0; background: #f1f1f1; }
.scrollbar__thumb { width: 21px; height: 495px; margin: 30px 0 auto; background: #c1c1c1; }

/* Sidebar */
.rail { display: flex; flex-direction: column; align-items: center; width: 82px; padding: 2px 2px 20px 0; border-left: 1px solid #6d6d6d; }
.rail__slot { display: flex; align-items: center; justify-content: center; height: 60.4px; }
.rail__add { margin-top: 25px; }
.rail__rule { width: 42px; height: 1px; margin: auto 0 24px; background: #6d6d6d; }
.rail__panel { margin-bottom: 38px; }

/* Taskbar */
.taskbar { display: flex; align-items: center; height: 72px; padding-bottom: 2px; flex: none; border-top: 2px solid #4a4543; background: linear-gradient(90deg, #27232a 0, #272224 30%, #2e201a 45%, #2f211a 65%, #2b211f 100%); }
.weather { position: relative; display: flex; align-items: center; gap: 11px; width: 268px; padding-left: 29px; font-size: 17.5px; letter-spacing: -0.25px; }
.weather__badge { position: absolute; left: 45px; top: -1px; width: 25px; height: 25px; border-radius: 50%; background: #c42b1c; font-size: 16px; line-height: 24px; text-align: center; }
.weather__text { display: flex; flex-direction: column; padding-bottom: 2px; line-height: 24px; }
.weather__state { color: #cfcdcd; }
.search { display: flex; align-items: center; width: 326px; height: 44px; margin-left: 22px; padding-left: 16px; border-radius: 22px; background: #f3f3f3; }
.search__label { flex: 1; padding-left: 15px; color: #606060; font-size: 20.5px; line-height: 28px; letter-spacing: -0.5px; }
.search__art { margin-right: 4px; }
.apps { display: flex; gap: 6px; margin-left: 8px; }
.app { position: relative; display: flex; align-items: center; justify-content: center; width: 60px; height: 60px; border-radius: 6px; }
.app--active { background: #3a2f2a; box-shadow: inset 0 0 0 1px #443a35; }
.app--open::after { content: ""; position: absolute; bottom: 1px; width: 9px; height: 5px; border-radius: 3px; background: #9f9894; }
.app--active::after { width: 24px; background: #4cc2ff; }
.app__dot { position: absolute; left: 32px; top: 5px; width: 24px; height: 24px; border-radius: 50%; background: #ffc20e; }
.app__letter { position: absolute; left: 12px; top: 21px; width: 18px; font-size: 14px; font-weight: 700; line-height: 18px; text-align: center; }
.tray { display: flex; align-items: center; margin-left: auto; padding-right: 28px; font-size: 17.5px; line-height: 24px; }
.tray__more { margin-right: 27px; }
.tray__cloud { margin-right: 23px; }
.lang { display: flex; flex-direction: column; align-items: center; width: 44px; letter-spacing: -0.2px; }
.status { display: flex; align-items: center; gap: 12px; margin-left: 23px; }
.clock { display: flex; flex-direction: column; align-items: flex-end; width: 118px; padding-bottom: 1px; letter-spacing: 0.15px; }
.clock__time { letter-spacing: -0.3px; }
.tray__count { width: 27px; height: 27px; margin-left: 10px; border-radius: 50%; background: #4cc2ff; color: #1b1b1b; font-size: 15px; line-height: 26px; text-align: center; letter-spacing: -0.4px; }
```
